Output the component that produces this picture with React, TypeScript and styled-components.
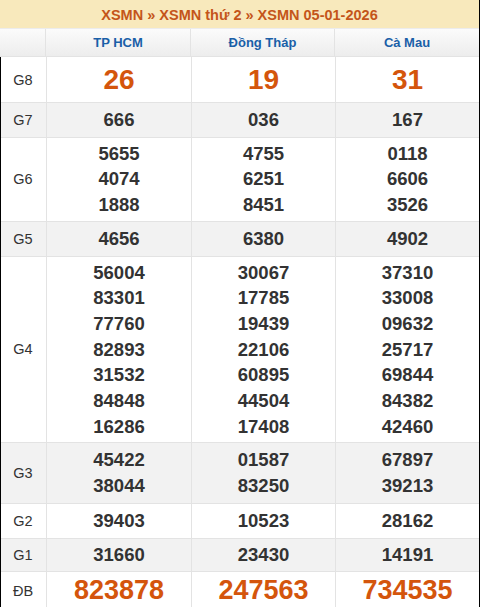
import React from "react";
import styled, { createGlobalStyle } from "styled-components";

const GlobalStyle = createGlobalStyle`
  html, body {
    margin: 0;
    padding: 0;
    background: #ffffff;
  }
  body {
    font-family: "Liberation Sans", Arial, sans-serif;
  }
`;

const Board = styled.div`
  width: 480px;
  box-sizing: border-box;
  border-right: 1px solid #000;
  border-bottom: 1px solid #000;
  background: #fff;
`;

const TitleBar = styled.div`
  height: 29px;
  background: #f8e9bc;
  border-bottom: 1px solid #ececec;
  box-sizing: border-box;
  display: flex;
  align-items: center;
  justify-content: center;
  font-size: 14.5px;
  font-weight: 700;
  color: #c4551a;
  padding-top: 1px;
`;

const Row = styled.div<{ $shade?: boolean; $last?: boolean }>`
  display: grid;
  grid-template-columns: 46px 145px 144px 1fr;
  background: ${(p) => (p.$shade ? "#f2f2f2" : "#ffffff")};
  border-bottom: ${(p) => (p.$last ? "none" : "1px solid #e3e3e3")};
`;

const HeadRow = styled(Row)`
  height: 28px;
  background: linear-gradient(#fbfbfb, #ededed);
  box-sizing: border-box;
`;

const Body = styled.div`
  border-left: 1px solid #000;
`;

const Cell = styled.div`
  display: flex;
  flex-direction: column;
  align-items: center;
  justify-content: center;
  border-right: 1px solid #e3e3e3;
  &:last-child {
    border-right: none;
  }
`;

const LabelCell = styled(Cell)`
  font-size: 14.5px;
  color: #333;
  margin-left: -1px;
`;

const Province = styled(Cell)`
  font-size: 13px;
  font-weight: 700;
  color: #1a5fa8;
`;

const Prize = styled(Cell)<{ $pad: number }>`
  padding: ${(p) => p.$pad}px 0;
`;

const Num = styled.div<{ $big?: number }>`
  font-weight: 700;
  font-size: ${(p) => (p.$big ? p.$big : 18.5)}px;
  line-height: ${(p) => (p.$big ? p.$big + 8 : 25.7)}px;
  color: ${(p) => (p.$big ? "#d4550c" : "#333333")};
`;

type PrizeRow = { label: string; values: string[][]; big?: number; pad: number };

const provinces = ["TP HCM", "Đồng Tháp", "Cà Mau"];

const prizes: PrizeRow[] = [
  { label: "G8", values: [["26"], ["19"], ["31"]], big: 28, pad: 4.5 },
  { label: "G7", values: [["666"], ["036"], ["167"]], pad: 4 },
  {
    label: "G6",
    values: [
      ["5655", "4074", "1888"],
      ["4755", "6251", "8451"],
      ["0118", "6606", "3526"],
    ],
    pad: 3,
  },
  { label: "G5", values: [["4656"], ["6380"], ["4902"]], pad: 4 },
  {
    label: "G4",
    values: [
      ["56004", "83301", "77760", "82893", "31532", "84848", "16286"],
      ["30067", "17785", "19439", "22106", "60895", "44504", "17408"],
      ["37310", "33008", "09632", "25717", "69844", "84382", "42460"],
    ],
    pad: 3,
  },
  {
    label: "G3",
    values: [
      ["45422", "38044"],
      ["01587", "83250"],
      ["67897", "39213"],
    ],
    pad: 4,
  },
  { label: "G2", values: [["39403"], ["10523"], ["28162"]], pad: 4 },
  { label: "G1", values: [["31660"], ["23430"], ["14191"]], pad: 3.5 },
  { label: "ĐB", values: [["823878"], ["247563"], ["734535"]], big: 27, pad: 1 },
];

export default function App() {
  return (
    <>
      <GlobalStyle />
      <Board>
        <TitleBar>XSMN » XSMN thứ 2 » XSMN 05-01-2026</TitleBar>
        <HeadRow>
          <Cell />
          {provinces.map((p) => (
            <Province key={p}>{p}</Province>
          ))}
        </HeadRow>
        <Body>
          {prizes.map((prize, i) => (
            <Row key={prize.label} $shade={i % 2 === 1} $last={i === prizes.length - 1}>
              <LabelCell>{prize.label}</LabelCell>
              {prize.values.map((col, j) => (
                <Prize key={j} $pad={prize.pad}>
                  {col.map((n) => (
                    <Num key={n} $big={prize.big}>
                      {n}
                    </Num>
                  ))}
                </Prize>
              ))}
            </Row>
          ))}
        </Body>
      </Board>
    </>
  );
}
